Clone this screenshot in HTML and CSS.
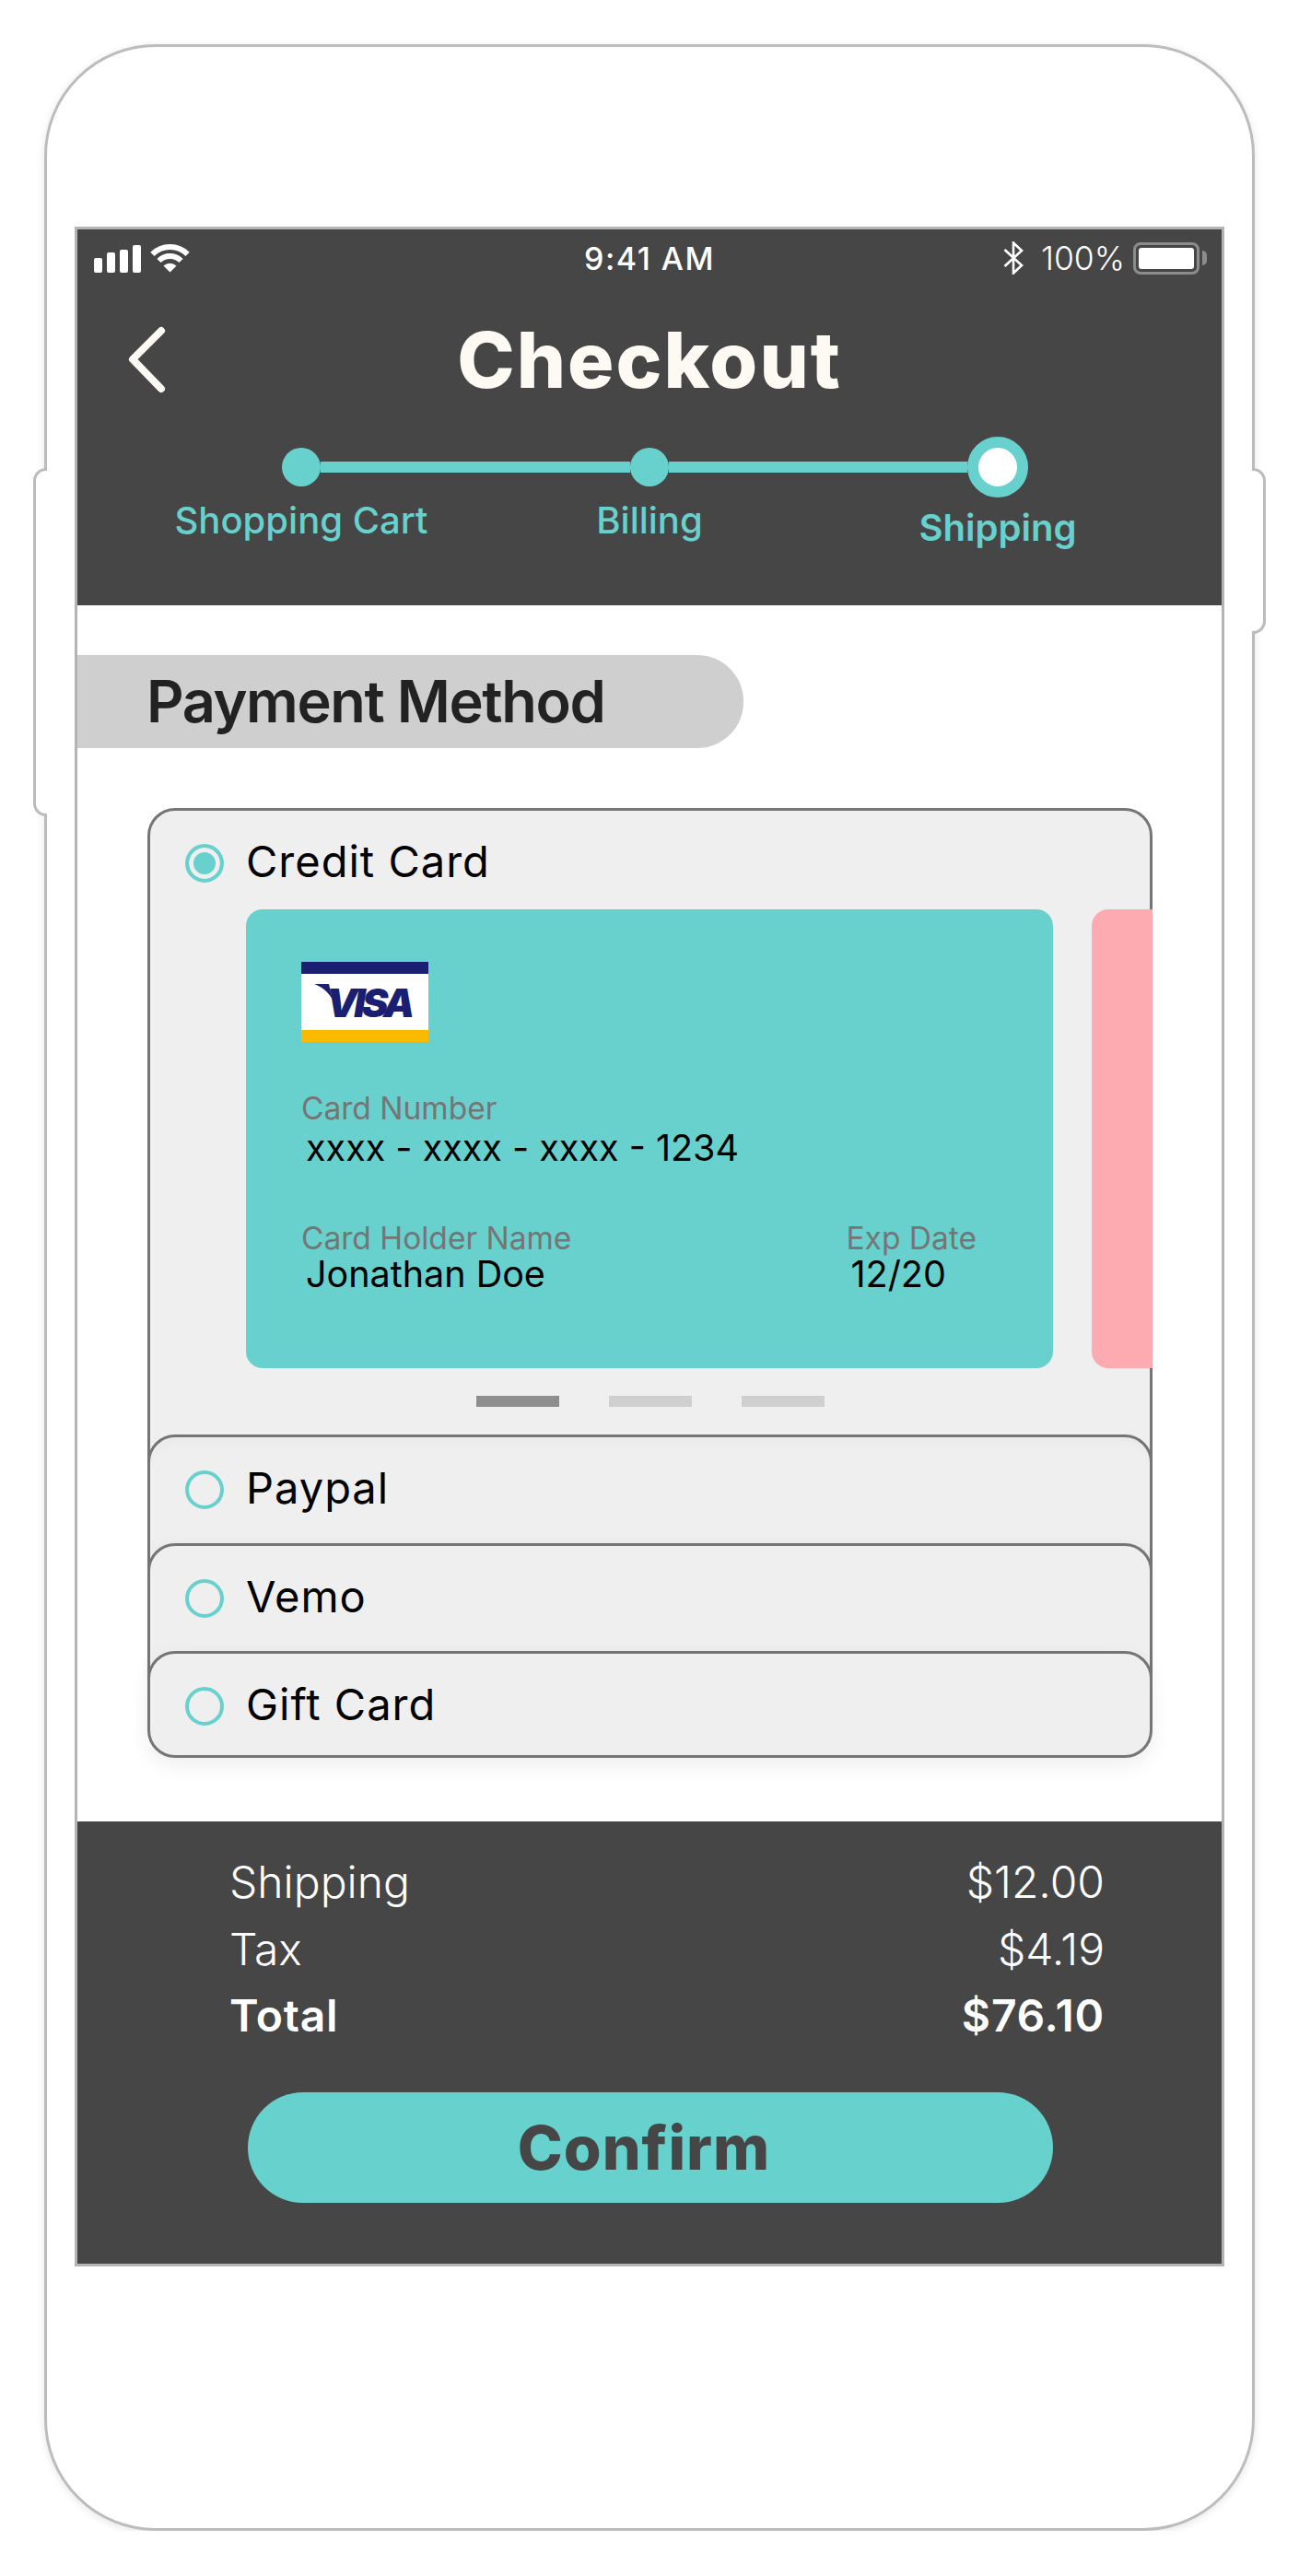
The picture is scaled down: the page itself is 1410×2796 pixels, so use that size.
FILE: index.html
```html
<!DOCTYPE html>
<html lang="en">
<head>
    <meta charset="UTF-8">
    <meta name="viewport" content="width=device-width, initial-scale=1.0">
    <title>Checkout</title>
    <link rel="stylesheet" href="styles.css">
</head>
<body>
    <div class="phone">
        <div class="side-button side-left"></div>
        <div class="side-button side-right"></div>
        <div class="screen">
            <header class="header">
                <div class="status-bar">
                    <div class="status-left">
                        <div class="signal">
                            <span class="bar bar-1"></span>
                            <span class="bar bar-2"></span>
                            <span class="bar bar-3"></span>
                            <span class="bar bar-4"></span>
                        </div>
                        <svg class="wifi" width="43" height="32" viewBox="0 0 43 32">
                            <path d="M2.4 11.9A27 27 0 0 1 40.6 11.9" fill="none" stroke="#fff" stroke-width="6" stroke-linejoin="round"/>
                            <path d="M9.5 19A17 17 0 0 1 33.5 19" fill="none" stroke="#fff" stroke-width="6"/>
                            <path d="M21.5 31.5L14.5 24.5A10 10 0 0 1 28.5 24.5Z" fill="#fff"/>
                        </svg>
                    </div>
                    <div class="status-time">9:41 AM</div>
                    <div class="status-right">
                        <svg class="bluetooth" width="22" height="36" viewBox="0 0 22 36">
                            <path d="M1.5 9L20 26L11 34.5V1.5L20 10L1.5 27" fill="none" stroke="#fff" stroke-width="2.6"/>
                        </svg>
                        <span class="battery-text">100%</span>
                        <div class="battery"><div class="battery-fill"></div></div>
                        <div class="battery-nub"></div>
                    </div>
                </div>
                <div class="nav">
                    <svg class="back" width="44" height="74" viewBox="0 0 44 74">
                        <path d="M37 5L6 36L37 68" fill="none" stroke="#fdfaf3" stroke-width="8" stroke-linecap="round" stroke-linejoin="round"/>
                    </svg>
                    <h1 class="title">Checkout</h1>
                </div>
                <div class="track">
                    <span class="dot"></span>
                    <span class="line line-first"></span>
                    <span class="dot"></span>
                    <span class="line"></span>
                    <span class="ring"></span>
                </div>
                <div class="steps">
                    <div class="step">Shopping Cart</div>
                    <div class="step">Billing</div>
                    <div class="step step-current">Shipping</div>
                </div>
            </header>

            <main class="content">
                <h2 class="section-title">Payment Method</h2>
                <div class="methods">
                    <div class="method method-open">
                        <div class="method-head">
                            <span class="radio radio-on"></span>
                            <span class="method-name">Credit Card</span>
                        </div>
                        <div class="carousel">
                            <div class="card card-teal">
                                <div class="visa">
                                    <svg class="visa-flick" width="20" height="18" viewBox="0 0 20 18">
                                        <path d="M0 0H16L20 17C15 8 8 3 0 0Z" fill="#1a1f71"/>
                                    </svg>
                                    <span class="visa-text">VISA</span>
                                </div>
                                <div class="card-label card-label-number">Card Number</div>
                                <div class="card-value">xxxx - xxxx - xxxx - 1234</div>
                                <div class="card-bottom">
                                    <div>
                                        <div class="card-label">Card Holder Name</div>
                                        <div class="card-value">Jonathan Doe</div>
                                    </div>
                                    <div>
                                        <div class="card-label">Exp Date</div>
                                        <div class="card-value">12/20</div>
                                    </div>
                                </div>
                            </div>
                            <div class="card card-pink"></div>
                        </div>
                        <div class="pager">
                            <span class="pager-bar pager-active"></span>
                            <span class="pager-bar"></span>
                            <span class="pager-bar"></span>
                        </div>
                    </div>
                    <div class="method method-row method-paypal">
                        <div class="method-head">
                            <span class="radio"></span>
                            <span class="method-name">Paypal</span>
                        </div>
                    </div>
                    <div class="method method-row">
                        <div class="method-head">
                            <span class="radio"></span>
                            <span class="method-name">Vemo</span>
                        </div>
                    </div>
                    <div class="method method-last">
                        <div class="method-head">
                            <span class="radio"></span>
                            <span class="method-name">Gift Card</span>
                        </div>
                    </div>
                </div>
            </main>

            <footer class="summary">
                <div class="summary-row"><span>Shipping</span><span>$12.00</span></div>
                <div class="summary-row"><span>Tax</span><span>$4.19</span></div>
                <div class="summary-row summary-total"><span>Total</span><span>$76.10</span></div>
                <button class="confirm">Confirm</button>
            </footer>
        </div>
    </div>
</body>
</html>
```

FILE: styles.css
```css
* {
    box-sizing: border-box;
}
body {
    margin: 0;
    background-color: #ffffff;
    font-family: Inter, "Liberation Sans", sans-serif;
}
.phone {
    position: relative;
    width: 1314px;
    height: 2699px;
    margin: 48px 0 0 48px;
    padding: 195px 0 0 30px;
    background-color: #ffffff;
    border: 3px solid #bcbcbc;
    border-radius: 121px;
    box-shadow: 0 2px 10px rgba(0, 0, 0, 0.1);
}
.side-button {
    position: absolute;
    top: 457px;
    width: 15px;
    background-color: #ffffff;
    border: 3px solid #bcbcbc;
}
.side-left {
    left: -15px;
    height: 378px;
    border-right: none;
    border-radius: 14px 0 0 14px;
}
.side-right {
    right: -15px;
    height: 180px;
    border-left: none;
    border-radius: 0 14px 14px 0;
}
.screen {
    display: flex;
    flex-direction: column;
    width: 1248px;
    height: 2214px;
    border: 3px solid #b4b4b4;
    background-color: #ffffff;
}

/* header */
.header {
    height: 408px;
    background-color: #464646;
}
.status-bar {
    position: relative;
    display: flex;
    justify-content: space-between;
    align-items: center;
    height: 62px;
    padding: 0 16px 0 18px;
    color: #ffffff;
}
.status-left {
    display: flex;
    align-items: flex-end;
    gap: 10px;
}
.signal {
    display: flex;
    align-items: flex-end;
    gap: 5px;
}
.bar {
    width: 9px;
    background-color: #ffffff;
    border-radius: 2px;
}
.bar-1 { height: 16px; }
.bar-2 { height: 22px; }
.bar-3 { height: 25px; }
.bar-4 { height: 30px; }
.status-time {
    position: absolute;
    left: 0;
    right: 0;
    text-align: center;
    font-size: 34px;
    font-weight: 500;
    letter-spacing: 1.5px;
}
.status-right {
    display: flex;
    align-items: center;
}
.bluetooth {
    margin-right: 19px;
}
.battery-text {
    font-size: 35.5px;
    font-weight: 300;
    margin-right: 9px;
}
.battery {
    width: 72px;
    height: 35px;
    padding: 3px;
    border: 3px solid #8c8c8c;
    border-radius: 8px;
}
.battery-fill {
    height: 100%;
    background-color: #ffffff;
    border-radius: 3px;
}
.battery-nub {
    width: 5px;
    height: 16px;
    margin-left: 3px;
    background-color: #8c8c8c;
    border-radius: 0 8px 8px 0;
}
.nav {
    display: grid;
    grid-template-columns: 1fr auto 1fr;
    align-items: center;
    height: 100px;
    margin-top: 30px;
    padding: 0 51px;
}
.back {
    display: block;
    margin-left: 3px;
}
.title {
    grid-column: 2;
    margin: 0;
    font-size: 84px;
    font-weight: 800;
    letter-spacing: 2px;
    line-height: 100px;
    color: #fdfaf3;
}
.track {
    display: flex;
    align-items: center;
    width: 810px;
    height: 66px;
    margin: 33px 0 0 222px;
}
.dot {
    flex: none;
    width: 42px;
    height: 42px;
    background-color: #69d1cd;
    border-radius: 50%;
}
.line {
    flex: 1;
    height: 12px;
    background-color: #69d1cd;
}
.line-first {
    flex: none;
    width: 336px;
}
.ring {
    flex: none;
    width: 66px;
    height: 66px;
    background-color: #ffffff;
    border: 12px solid #69d1cd;
    border-radius: 50%;
}
.steps {
    display: grid;
    grid-template-columns: repeat(3, 378px);
    justify-content: center;
    margin-top: 5px;
}
.step {
    text-align: center;
    font-size: 40px;
    font-weight: 500;
    line-height: 40px;
    color: #69d1cd;
}
.step-current {
    margin-top: 8px;
    font-weight: 600;
}

/* payment methods */
.content {
    flex: 1;
    padding-top: 54px;
}
.section-title {
    width: 723px;
    height: 101px;
    margin: 0;
    padding-left: 75px;
    background-color: #cfcfcf;
    border-radius: 0 50px 50px 0;
    font-size: 63px;
    font-weight: 600;
    letter-spacing: -1.4px;
    line-height: 101px;
    color: #222222;
}
.methods {
    margin: 65px 75px 0 76px;
}
.method {
    position: relative;
    padding-top: 36px;
    background-color: #efefef;
    border: 3px solid #757575;
    border-radius: 30px 30px 0 0;
}
.method-open {
    height: 710px;
    margin-bottom: -30px;
}
.method-row {
    height: 147.5px;
    margin-bottom: -30px;
    box-shadow: 0 -2px 10px rgba(0, 0, 0, 0.03);
}
.method-paypal {
    box-shadow: inset 0 14px 14px -8px rgba(0, 0, 0, 0.025);
}
.method-last {
    height: 116px;
    border-radius: 30px;
    box-shadow: 0 8px 22px rgba(0, 0, 0, 0.07);
}
.method-head {
    display: flex;
    align-items: center;
    gap: 24px;
    height: 42px;
    padding-left: 38px;
}
.radio {
    flex: none;
    width: 42px;
    height: 42px;
    border: 4px solid #69d1cd;
    border-radius: 50%;
}
.radio-on {
    background-color: #69d1cd;
    box-shadow: inset 0 0 0 5px #efefef;
}
.method-name {
    padding-bottom: 4px;
    font-size: 47px;
    line-height: 52px;
    letter-spacing: 1px;
    color: #000000;
}
.carousel {
    display: flex;
    gap: 42px;
    margin: 29px -3px 0 104px;
    overflow: hidden;
}
.card {
    flex: none;
    width: 876px;
    height: 498px;
    border-radius: 18px;
}
.card-teal {
    padding: 57px 83px 0 60px;
    background-color: #69d1cd;
}
.card-pink {
    background-color: #fdaab1;
}
.visa {
    position: relative;
    display: flex;
    align-items: center;
    width: 138px;
    height: 87px;
    padding-left: 27px;
    background-color: #ffffff;
    border-top: 13px solid #1a1f71;
    border-bottom: 13px solid #fbb900;
}
.visa-text {
    font-size: 43px;
    font-weight: 900;
    font-style: italic;
    letter-spacing: -4px;
    line-height: 46px;
    color: #1a1f71;
}
.visa-flick {
    position: absolute;
    left: 14px;
    top: 11px;
}
.card-label {
    font-size: 33.5px;
    line-height: 40px;
    color: #757575;
}
.card-label-number {
    margin-top: 52px;
}
.card-value {
    margin: 1px 0 0 5px;
    font-size: 39.5px;
    line-height: 44px;
    color: #000000;
}
.card-bottom {
    display: flex;
    justify-content: space-between;
    margin-top: 56px;
}
.card-bottom .card-value {
    margin-top: -3px;
}
.pager {
    display: flex;
    justify-content: center;
    gap: 54px;
    margin-top: 30px;
}
.pager-bar {
    width: 90px;
    height: 12px;
    background-color: #cfcfcf;
}
.pager-active {
    background-color: #8e8e8e;
}

/* summary */
.summary {
    height: 480px;
    padding: 30px 127px 0 165px;
    background-color: #464646;
    color: #ffffff;
}
.summary-row {
    display: flex;
    justify-content: space-between;
    font-size: 48px;
    font-weight: 300;
    line-height: 72.5px;
}
.summary-total {
    font-weight: 600;
    letter-spacing: 0.8px;
}
.confirm {
    display: block;
    width: 874px;
    height: 120px;
    margin: 46px 0 0 20px;
    padding: 0 14px 0 0;
    background-color: #67d1cd;
    border: none;
    border-radius: 60px;
    font-family: inherit;
    font-size: 66px;
    font-weight: 800;
    letter-spacing: 1px;
    color: #464646;
}
```
